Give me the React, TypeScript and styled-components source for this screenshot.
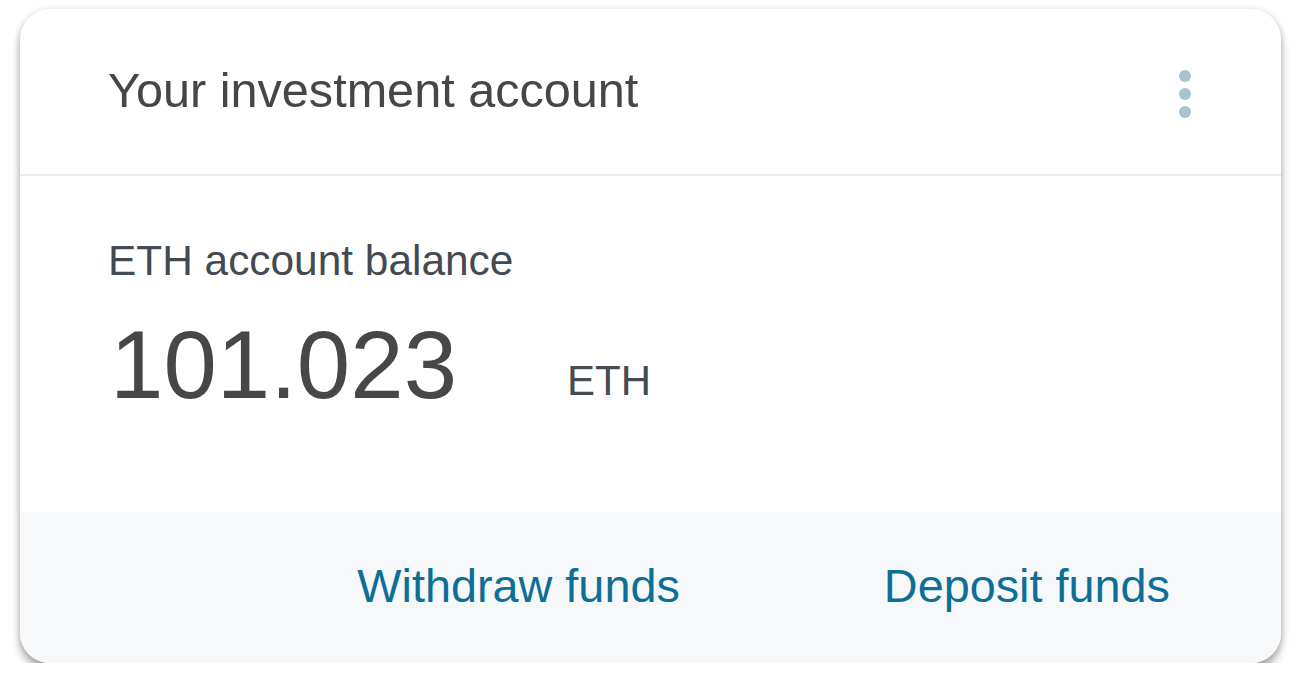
import React from "react";
import { styled, createGlobalStyle } from "styled-components";

const GlobalStyle = createGlobalStyle`
  html, body {
    margin: 0;
    padding: 0;
    background: #ffffff;
  }
  body {
    font-family: "Liberation Sans", Arial, Helvetica, sans-serif;
  }
`;

function AccountCard() {
  const balance = "101.023";
  const currency = "ETH";

  return (
    <Card>
      <Header>
        <Title>Your investment account</Title>
        <MoreButton aria-label="More options">
          <Dot />
          <Dot />
          <Dot />
        </MoreButton>
      </Header>
      <Body>
        <Label>{currency} account balance</Label>
        <BalanceRow>
          <Amount>{balance}</Amount>
          <Currency>{currency}</Currency>
        </BalanceRow>
      </Body>
      <Footer>
        <LinkButton>Withdraw funds</LinkButton>
        <LinkButton>Deposit funds</LinkButton>
      </Footer>
    </Card>
  );
}

export default function App() {
  return (
    <>
      <GlobalStyle />
      <Page>
        <AccountCard />
      </Page>
    </>
  );
}

const Page = styled.div`
  padding: 9px 0 0 20px;
`;

const Card = styled.div`
  width: 1261px;
  height: 654px;
  border-radius: 30px;
  background: #ffffff;
  overflow: hidden;
  display: flex;
  flex-direction: column;
  box-shadow: 0 7px 8px rgba(0, 0, 0, 0.32), 0 0 6px rgba(0, 0, 0, 0.12);
`;

const Header = styled.div`
  height: 167px;
  flex-shrink: 0;
  display: flex;
  align-items: center;
  justify-content: space-between;
  padding: 0 90px 4px 88px;
  box-sizing: border-box;
  border-bottom: 2px solid #e9eaeb;
`;

const Title = styled.h1`
  margin: 0;
  font-size: 48.6px;
  line-height: 56px;
  font-weight: 400;
  color: #464646;
`;

const MoreButton = styled.button`
  display: flex;
  flex-direction: column;
  align-items: center;
  gap: 6px;
  padding: 0;
  margin-top: 8px;
  border: none;
  background: none;
  cursor: pointer;
`;

const Dot = styled.span`
  width: 12px;
  height: 12px;
  border-radius: 50%;
  background: #a6c3cf;
`;

const Body = styled.div`
  flex: 1;
  padding: 61px 88px 0;
  background: #ffffff;
`;

const Label = styled.p`
  margin: 0;
  font-size: 42.4px;
  line-height: 48px;
  color: #434a52;
`;

const BalanceRow = styled.div`
  display: flex;
  align-items: baseline;
  gap: 110px;
  margin-top: 25px;
`;

const Amount = styled.span`
  font-size: 96px;
  line-height: 110px;
  color: #474747;
  padding-left: 2px;
`;

const Currency = styled.span`
  font-size: 42px;
  line-height: 48px;
  color: #454c54;
  position: relative;
  top: -3px;
`;

const Footer = styled.div`
  height: 151px;
  flex-shrink: 0;
  display: flex;
  align-items: center;
  justify-content: flex-end;
  gap: 204px;
  padding: 0 111px 0 0;
  box-sizing: border-box;
  background: #f6f8fa;
`;

const LinkButton = styled.button`
  border: none;
  background: none;
  padding: 0;
  font-family: inherit;
  font-size: 46.8px;
  line-height: 52px;
  color: #0e6f96;
  cursor: pointer;
  margin-top: -4px;
`;
